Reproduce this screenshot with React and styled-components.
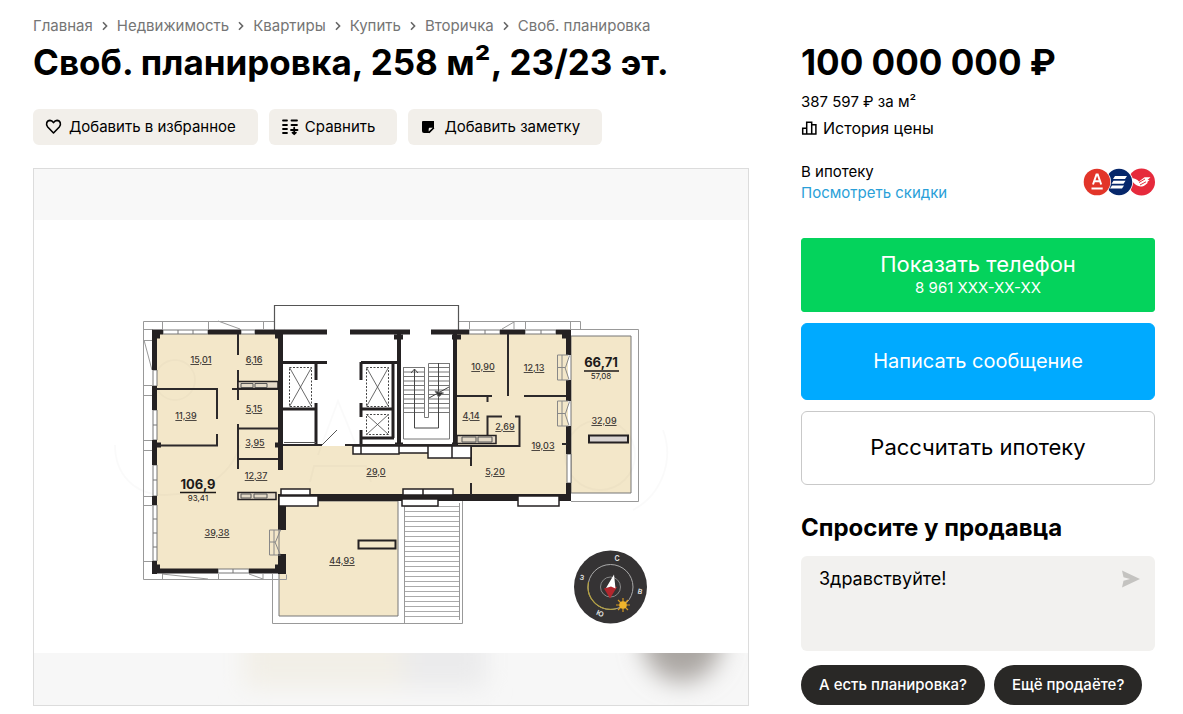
import React, { useState } from 'react';
import styled, { createGlobalStyle } from 'styled-components';

const GlobalStyle = createGlobalStyle`
  * {
    box-sizing: border-box;
  }

  body {
    margin: 0;
    background: #fff;
    color: #000;
    font-family: Inter, Roboto, sans-serif;
    font-size: 15px;
    line-height: 20px;
  }

  button, textarea {
    font-family: inherit;
    color: inherit;
  }
`;

const Page = styled.main`
  display: grid;
  grid-template-columns: minmax(0, 1fr) 354px;
  column-gap: 52px;
  align-items: start;
  padding: 16px 28px 8px 33px;
`;

const Breadcrumbs = styled.nav`
  display: flex;
  align-items: center;
  gap: 9px;
  font-size: 15px;
  line-height: 20px;
  color: #757575;
  white-space: nowrap;

  a {
    color: inherit;
    text-decoration: none;
  }
`;

const Title = styled.h1`
  margin: 4px 0 0;
  font-size: 35px;
  line-height: 44px;
  font-weight: 700;
  white-space: nowrap;
`;

const Toolbar = styled.div`
  display: flex;
  gap: 11px;
  margin-top: 25px;
`;

const ToolButton = styled.button`
  display: flex;
  align-items: center;
  gap: 6px;
  height: 36px;
  padding: 0 22px 0 12px;
  border: 0;
  border-radius: 6px;
  background: #f2efea;
  font-size: 15px;
  line-height: 20px;
  white-space: nowrap;
  cursor: pointer;
`;

const Gallery = styled.figure`
  margin: 23px 0 0;
  border: 1px solid #dcdcdc;

  svg {
    display: block;
    width: 100%;
    height: auto;
  }
`;

const Price = styled.h2`
  margin: 24px 0 0;
  font-size: 35px;
  line-height: 44px;
  font-weight: 700;
  white-space: nowrap;
`;

const PerMeter = styled.p`
  margin: 8px 0 0;
  font-size: 15px;
  line-height: 20px;
`;

const HistoryButton = styled.button`
  display: flex;
  align-items: center;
  gap: 5px;
  margin-top: 6px;
  padding: 0;
  border: 0;
  background: none;
  font-size: 16px;
  line-height: 20px;
  cursor: pointer;
`;

const Mortgage = styled.div`
  display: flex;
  align-items: center;
  justify-content: space-between;
  margin-top: 23px;

  p {
    margin: 0;
    line-height: 21px;
  }

  a {
    color: #2a9fd8;
    text-decoration: none;
  }
`;

const Actions = styled.div`
  display: flex;
  flex-direction: column;
  gap: 11px;
  margin-top: 35px;
`;

const ActionButton = styled.button`
  display: flex;
  flex-direction: column;
  align-items: center;
  justify-content: center;
  width: 100%;
  height: ${({ $height }) => $height || 74}px;
  padding: 0 0 2px;
  border: 1px solid ${({ $border, $bg }) => $border || $bg};
  border-radius: ${({ $radius }) => $radius || 6}px;
  background: ${({ $bg }) => $bg};
  color: ${({ $color }) => $color || '#fff'};
  font-size: ${({ $size }) => $size || 22}px;
  line-height: 28px;
  cursor: pointer;

  small {
    font-size: 15px;
    line-height: 20px;
  }
`;

const AskTitle = styled.h3`
  margin: 28px 0 0;
  font-size: 24px;
  line-height: 30px;
  font-weight: 700;
`;

const MessageBox = styled.form`
  display: flex;
  align-items: flex-start;
  height: 95px;
  margin-top: 13px;
  padding: 12px 14px 12px 18px;
  border-radius: 6px;
  background: #f2f1ef;

  textarea {
    flex: 1;
    height: 100%;
    padding: 0;
    border: 0;
    outline: 0;
    resize: none;
    background: transparent;
    font-size: 18px;
    line-height: 22px;
  }

  button {
    display: flex;
    padding: 0;
    border: 0;
    background: none;
    cursor: pointer;
  }
`;

const Hints = styled.div`
  display: flex;
  gap: 9px;
  margin-top: 14px;
`;

const Hint = styled.button`
  height: 40px;
  padding: 0 18px;
  border: 0;
  border-radius: 20px;
  background: #292826;
  color: #fff;
  font-size: 15px;
  font-weight: 500;
  line-height: 20px;
  white-space: nowrap;
  cursor: pointer;
`;

const crumbs = ['Главная', 'Недвижимость', 'Квартиры', 'Купить', 'Вторичка', 'Своб. планировка'];

const rooms = [
  [201, 363, '15,01'],
  [254, 363, '6,16'],
  [186, 419, '11,39'],
  [254, 412, '5,15'],
  [255, 446, '3,95'],
  [256, 479, '12,37'],
  [217, 536, '39,38'],
  [342, 564, '44,93'],
  [376, 475, '29,0'],
  [483, 370, '10,90'],
  [534, 371, '12,13'],
  [471, 419, '4,14'],
  [505, 430, '2,69'],
  [543, 449, '19,03'],
  [495, 475, '5,20'],
  [604, 424, '32,09'],
];

const range = (n) => Array.from({ length: n }, (_, i) => i);

function Chevron() {
  return (
    <svg width="6" height="10" viewBox="0 0 6 10" fill="none" stroke="#666" strokeWidth="1.6" aria-hidden="true">
      <path d="M1 1.2 4.6 5 1 8.8" />
    </svg>
  );
}

function HeartIcon() {
  return (
    <svg width="18" height="18" viewBox="0 0 18 18" fill="none" stroke="#000" strokeWidth="1.6" strokeLinejoin="round" aria-hidden="true">
      <path d="M8.5 15 2.7 9C.5 6.500 1.600 2.500 5 2.400c1.600 0 2.700 1 3.500 2.200.8-1.200 1.900-2.200 3.500-2.200 3.400.1 4.500 4.100 2.300 6.600Z" />
    </svg>
  );
}

function CompareIcon() {
  return (
    <svg width="18" height="18" viewBox="0 0 18 18" fill="none" stroke="#000" strokeWidth="1.8" strokeLinecap="round" aria-hidden="true">
      <path d="M2 2.500h4M2 7h4M2 11h4M2 15h4M10.500 2.500h5.500M10.500 7h5.500M10 12h6.500M13.200 9.700v6.500M11.500 14.600l1.700 1.500 1.700-1.500" />
    </svg>
  );
}

function NoteIcon() {
  return (
    <svg width="18" height="18" viewBox="0 0 18 18" aria-hidden="true">
      <path d="M2.500 3H14v7l-5 5H4a2 2 0 0 1-2-2V3.500Z" />
      <path d="M8.700 13.500V11c0-.8.500-1.300 1.300-1.300h2.800Z" fill="#f2efea" />
      <path d="M9 14.800 14 9.800" stroke="#000" strokeWidth="1.200" />
    </svg>
  );
}

function ChartIcon() {
  return (
    <svg width="17" height="16" viewBox="0 0 17 16" fill="none" stroke="#000" strokeWidth="1.5" aria-hidden="true">
      <path d="M1.700 14V8.300h4V14M5.700 14V2.200h5V14M10.700 4.700h4.200V14M1 14h14.600" />
    </svg>
  );
}

function SendIcon() {
  return (
    <svg width="20" height="22" viewBox="0 0 20 22" fill="#c4c3c0" aria-hidden="true">
      <path d="M1 2.500 19 11 1 19.500 2.500 12.800 9 11 2.500 9.200Z" />
    </svg>
  );
}

function BankLogos() {
  return (
    <svg width="72" height="28" viewBox="0 0 72 28" role="img" aria-label="Банки">
      <circle cx="58.500" cy="14" r="13.500" fill="#e62a3c" />
      <path d="M47.500 10c4 0 6.500 1.200 8.500 3.500l5.500-4.200h6l-3 2.700h2l-2.700 2.600h1.400l-3 2.300c-5.500 4.500-12-1-14.700-6.900Z" fill="#fff" />
      <path d="M56 14.500 62 11M57 17l6-3.200" stroke="#e62a3c" strokeWidth="1" />
      <circle cx="36" cy="14" r="14" fill="#fff" />
      <circle cx="36" cy="14" r="13.200" fill="#06276b" />
      <path d="M32 8h12l-2 3H30zM30.500 12.700h12l-2 3h-12zM29 17.400h12l-2 3H27z" fill="#fff" />
      <circle cx="14" cy="14" r="14" fill="#fff" />
      <circle cx="14" cy="14" r="13.300" fill="#e23529" />
      <path d="M10 16.500 13.500 6.500h1.200l3.500 10M11.300 13.300h5.600" fill="none" stroke="#fff" strokeWidth="2" />
      <path d="M8.500 20.500h11.200" stroke="#fff" strokeWidth="2" />
    </svg>
  );
}

function Compass() {
  return (
    <g>
      <circle cx="610.500" cy="587" r="36.500" fill="#353334" />
      <circle cx="610.500" cy="587" r="22.500" fill="none" stroke="#aaa" />
      <path d="M588.500 582a22.500 22.500 0 0 0 28 26.500" fill="none" stroke="#b5a13c" strokeWidth="1.2" />
      <circle cx="610.500" cy="587" r="10" fill="none" stroke="#888" />
      <path d="M604 588.500 611.500 586l5.500 1-7 11.500Z" fill="#b3262d" />
      <path d="M614 574.500 606 588l5-1.500 4.500 2Z" fill="#fff" />
      <path d="M623 598v14M616 605h14M618 600l10 10M628 600l-10 10" stroke="#d79a20" strokeWidth="1.2" />
      <circle cx="623" cy="605" r="3.800" fill="#efb42c" />
      <g fill="#ddd" fontSize="7" fontWeight="700" textAnchor="middle">
        <text x="617" y="561">С</text>
        <text transform="translate(640 592) rotate(12)" y="2">В</text>
        <text transform="translate(600 614) rotate(25)" y="2">Ю</text>
        <text transform="translate(582 578) rotate(12)" y="2">З</text>
      </g>
    </g>
  );
}

function FloorPlan() {
  return (
    <svg viewBox="34 169 714 536" role="img" aria-label="Планировка квартиры" fontFamily="Inter, sans-serif">
      <defs>
        <filter id="soft" x="-40%" y="-80%" width="180%" height="260%">
          <feGaussianBlur stdDeviation="12" />
        </filter>
        <clipPath id="bottomStrip">
          <rect x="34" y="653" width="714" height="52" />
        </clipPath>
      </defs>

      <rect x="34" y="169" width="714" height="536" fill="#fff" />
      <rect x="34" y="169" width="714" height="51" fill="#f8f8f8" />
      <rect x="34" y="653" width="714" height="52" fill="#f7f7f7" />
      <g clipPath="url(#bottomStrip)">
        <g filter="url(#soft)">
          <rect x="244" y="630" width="160" height="58" fill="#f2efe7" />
          <rect x="404" y="630" width="82" height="58" fill="#ebebec" />
          <ellipse cx="682" cy="640" rx="40" ry="42" fill="#aaa6a2" />
        </g>
      </g>

      {/* rooms and terraces */}
      <g fill="#f3e7c9">
        <path d="M155 332h125v238H155z" />
        <path d="M280 446h191v51H280zM455 332h113v165H455z" />
        <path d="M571 336h60v157h-60z" stroke="#777" />
        <path d="M279 501h119v115H279z" stroke="#777" />
      </g>
      <path d="M455 446h16v12h-16z" fill="#fff" />

      {/* faint mark over the plan */}
      <g fill="none" stroke="#000" strokeOpacity=".02" strokeWidth="2">
        <path d="M318 455 338 401l22 54M310 482l4-16h52l5 16M115 445c0 30 20 50 50 50s65-15 75-50" />
        <path d="M663 430a65 65 0 0 1-30 80" />
        <circle cx="600" cy="455" r="35" />
        <circle cx="175" cy="380" r="20" />
      </g>

      {/* outer contours */}
      <g fill="none" stroke="#999" strokeWidth="1">
        <path d="M274.500 321.500h-131v258h143v-5M143.500 329.500h9M143.500 340.500h9M143.500 385.500h9M143.500 395.500h9M143.500 440.500h9M143.500 450.500h9M143.500 496.500h9M143.500 505.500h9M143.500 561.500h9" />
        <path d="M162.500 321v8M208.500 321v8M263.500 321v8M218 321l22 8M144 340l8 30M162.500 574v5M218.500 574v5M162 574l46 5M249 574l14 5v-5" />
        <path d="M458.500 321.500h122v8M469.500 321v8M525.500 321v8M570.500 321v8M502 329l12-7v7" />
        <path d="M571 329.500h67.500v172H571M272.500 574v49.500h190V501M404.500 506v117M459.500 503v117" />
      </g>
      <path d="M274.500 330v-24.500h184V330" fill="none" stroke="#555" strokeWidth="1.2" />
      <g stroke="#aaa" strokeWidth="1">
        {range(23).map((i) => (
          <path key={i} d={`M405 ${506.5 + i * 5}h54`} />
        ))}
      </g>

      {/* windows */}
      <g fill="#fff" stroke="#777" strokeWidth="1">
        <path d="M163 330h45v4h-45zM178 330v4M193 330v4M241 330h14v4h-14zM469 330h31v4h-31zM485 330v4M525 330h31v4h-31zM541 330v4" />
        <path d="M153 370h4v16h-4zM153 410h4v30h-4zM153 425h4M153 465h4v31h-4zM153 480h4M153 505h4v56h-4zM153 519h4M153 533h4M153 547h4M218 569h31v4h-31zM233 569v4M567 454h4v29h-4z" />
      </g>

      {/* bearing walls */}
      <g fill="none" stroke="#242122" strokeWidth="5">
        <path d="M152 332h11M208 332h33M255 332h72M350 332h60M431 332h38M500 332h25M556 332h15" />
        <path d="M154.500 330v40M154.500 386v24M154.500 440v25M154.500 496v9M154.500 561v13M152 571h66M249 571h37" />
        <path d="M280.500 330v140M568.500 330v25M568.500 380v21M568.500 426v28M568.500 483v18" />
        <path d="M275 336h5M157 336h3M394 337h9M452 337h9M275 445h5M395 445h8M452 445h6M157 445h4M157 567h3M275 567h5M562 336h5" />
      </g>
      <path d="M278 497.500h293" stroke="#242122" strokeWidth="7" />
      <path d="M282 501v29M282 554v20" stroke="#242122" strokeWidth="8" />
      <path d="M399 332v113M455 332v115" stroke="#242122" strokeWidth="4" />
      <path d="M283 362.500h44M361 362.500h38M283 409h33M316 362v18M316 403v42M361 362v18M361 403v14M361 430v15M361 409h32M393 363v75M361 438h33" fill="none" stroke="#242122" strokeWidth="3" />

      {/* partitions */}
      <g fill="none" stroke="#2c292a" strokeWidth="2">
        <path d="M238 334v21M238 370v19M232 389h46M157 389h60v30M217 434v11.500h-60M238 389v11M238 424v31M238 428.500h40M238 459h40M238 447v22" />
        <path d="M283 445h39M345 445h112M508 334v62M457 396h35M524 396h42M487.500 396v6M502 416.500h-14.500V435M515 416.500h4.500V446H457M471 446v20M471 483v12M562 444h5" />
      </g>
      <path d="M322 445l15-15M284 442.500h32" stroke="#555" strokeWidth="1" />

      {/* shafts and niches */}
      <g fill="#fff" stroke="#242122" strokeWidth="1.5">
        <path d="M353 446h46v8h-46zM399 446h29v7h-29zM428 446h24v12h-24zM452 446h19v12h-19zM361 446v8" />
        <path d="M281 489h29v6h-29zM279 496h39v10h-39zM403 489h50v6h-50zM423 489v6M402 499h36v7h-36zM518 496h41v10h-41z" />
      </g>
      <g fill="#e4dac8" stroke="#242122" strokeWidth="1.5">
        <path d="M238 381.500h40v7h-40zM238 492.500h38v7h-38zM457 435.500h39v8h-39z" />
        <path d="M589 435.500h39v7h-39z" fill="#d9d4d2" strokeWidth="2" />
        <path d="M358.500 540.500h37v8h-37z" fill="#f3e7c9" strokeWidth="2" />
      </g>
      <path d="M241 383.500h12v4h-12zM255 383.500h12v4h-12zM241 494h10v4h-10zM254 494h13v4h-13zM462 437h14v5h-14zM478 437h14v5h-14z" fill="none" stroke="#555" strokeWidth="1" />

      {/* lifts */}
      <g fill="none" stroke="#444" strokeWidth="1">
        <path d="M289.500 367.500h22v39h-22zM366.500 367.500h22v39h-22zM366.500 414.500h22v20h-22z" strokeDasharray="2 1.5" />
        <path d="M289.500 367.500l22 39M311.500 367.500l-22 39M366.500 367.500l22 39M388.500 367.500l-22 39M366.500 414.500l22 20M388.500 414.500l-22 20" strokeWidth=".8" />
      </g>

      {/* stairs */}
      <g fill="none" stroke="#777" strokeWidth="1">
        <path d="M403.500 413v26h46v-26M403.500 367.500h21v50h4v-54h21M403.500 367v46M449.500 363v50" />
        {range(11).map((i) => (
          <path key={i} d={`M404 ${367.5 + i * 4.5}h21M428 ${367.5 + i * 4.5}h21`} />
        ))}
        <path d="M414.500 369v59h24v-65M411 373l3.500-4 3.500 4M429 398l20-11" stroke="#444" />
        <path d="M435 391l3.500 6 5-4Z" fill="#333" />
      </g>

      {/* balcony doors */}
      <g fill="none" stroke="#888" strokeWidth="1">
        <path d="M557.500 355v25h11M557.500 355h11M562 355v25M557.500 367.500h8l4-12M565 367.500l4 12" />
        <path d="M557.500 401v25h11M557.500 401h11M562 401v25M557.500 413.500h8l4-12M565 413.500l4 12" />
        <path d="M269.500 530v25h11M269.500 530h11M274 530v25M269.500 542h6l5-12M275 542l5 12" />
      </g>

      <g fill="#3a3633" fontSize="9" fontWeight="500" textAnchor="middle" textDecoration="underline">
        {rooms.map(([x, y, area]) => (
          <text key={area} x={x} y={y}>{area}</text>
        ))}
      </g>
      <g fill="#1d1a19" textAnchor="middle">
        <text x="198" y="489" fontSize="13" fontWeight="700">106,9</text>
        <text x="198" y="501" fontSize="8">93,41</text>
        <text x="601" y="367" fontSize="13" fontWeight="700">66,71</text>
        <text x="601" y="379" fontSize="8">57,08</text>
      </g>
      <path d="M180 492.500h36M584 371h35" stroke="#1d1a19" strokeWidth="1.5" />

      <Compass />
    </svg>
  );
}

function App() {
  const [message, setMessage] = useState('Здравствуйте!');

  return (
    <>
      <GlobalStyle />
      <Page>
        <section>
          <Breadcrumbs aria-label="Навигация">
            {crumbs.map((name, i) => (
              <React.Fragment key={name}>
                {i > 0 && <Chevron />}
                <a href="#">{name}</a>
              </React.Fragment>
            ))}
          </Breadcrumbs>
          <Title>Своб. планировка, 258 м², 23/23 эт.</Title>
          <Toolbar>
            <ToolButton type="button"><HeartIcon />Добавить в избранное</ToolButton>
            <ToolButton type="button"><CompareIcon />Сравнить</ToolButton>
            <ToolButton type="button"><NoteIcon />Добавить заметку</ToolButton>
          </Toolbar>
          <Gallery>
            <FloorPlan />
          </Gallery>
        </section>

        <aside>
          <Price>100 000 000 ₽</Price>
          <PerMeter>387 597 ₽ за м²</PerMeter>
          <HistoryButton type="button"><ChartIcon />История цены</HistoryButton>

          <Mortgage>
            <div>
              <p>В ипотеку</p>
              <p><a href="#">Посмотреть скидки</a></p>
            </div>
            <BankLogos />
          </Mortgage>

          <Actions>
            <ActionButton type="button" $bg="#04d35c" $radius={3}>
              Показать телефон
              <small>8 961 XXX-XX-XX</small>
            </ActionButton>
            <ActionButton type="button" $bg="#00aaff" $height={77} $size={20}>Написать сообщение</ActionButton>
            <ActionButton type="button" $bg="#fff" $border="#c9c9c9" $color="#000">Рассчитать ипотеку</ActionButton>
          </Actions>

          <AskTitle>Спросите у продавца</AskTitle>
          <MessageBox onSubmit={(e) => e.preventDefault()}>
            <textarea
              aria-label="Сообщение продавцу"
              value={message}
              onChange={(e) => setMessage(e.target.value)}
            />
            <button type="submit" aria-label="Отправить"><SendIcon /></button>
          </MessageBox>
          <Hints>
            <Hint type="button" onClick={() => setMessage('А есть планировка?')}>А есть планировка?</Hint>
            <Hint type="button" onClick={() => setMessage('Ещё продаёте?')}>Ещё продаёте?</Hint>
          </Hints>
        </aside>
      </Page>
    </>
  );
}

export default App;
